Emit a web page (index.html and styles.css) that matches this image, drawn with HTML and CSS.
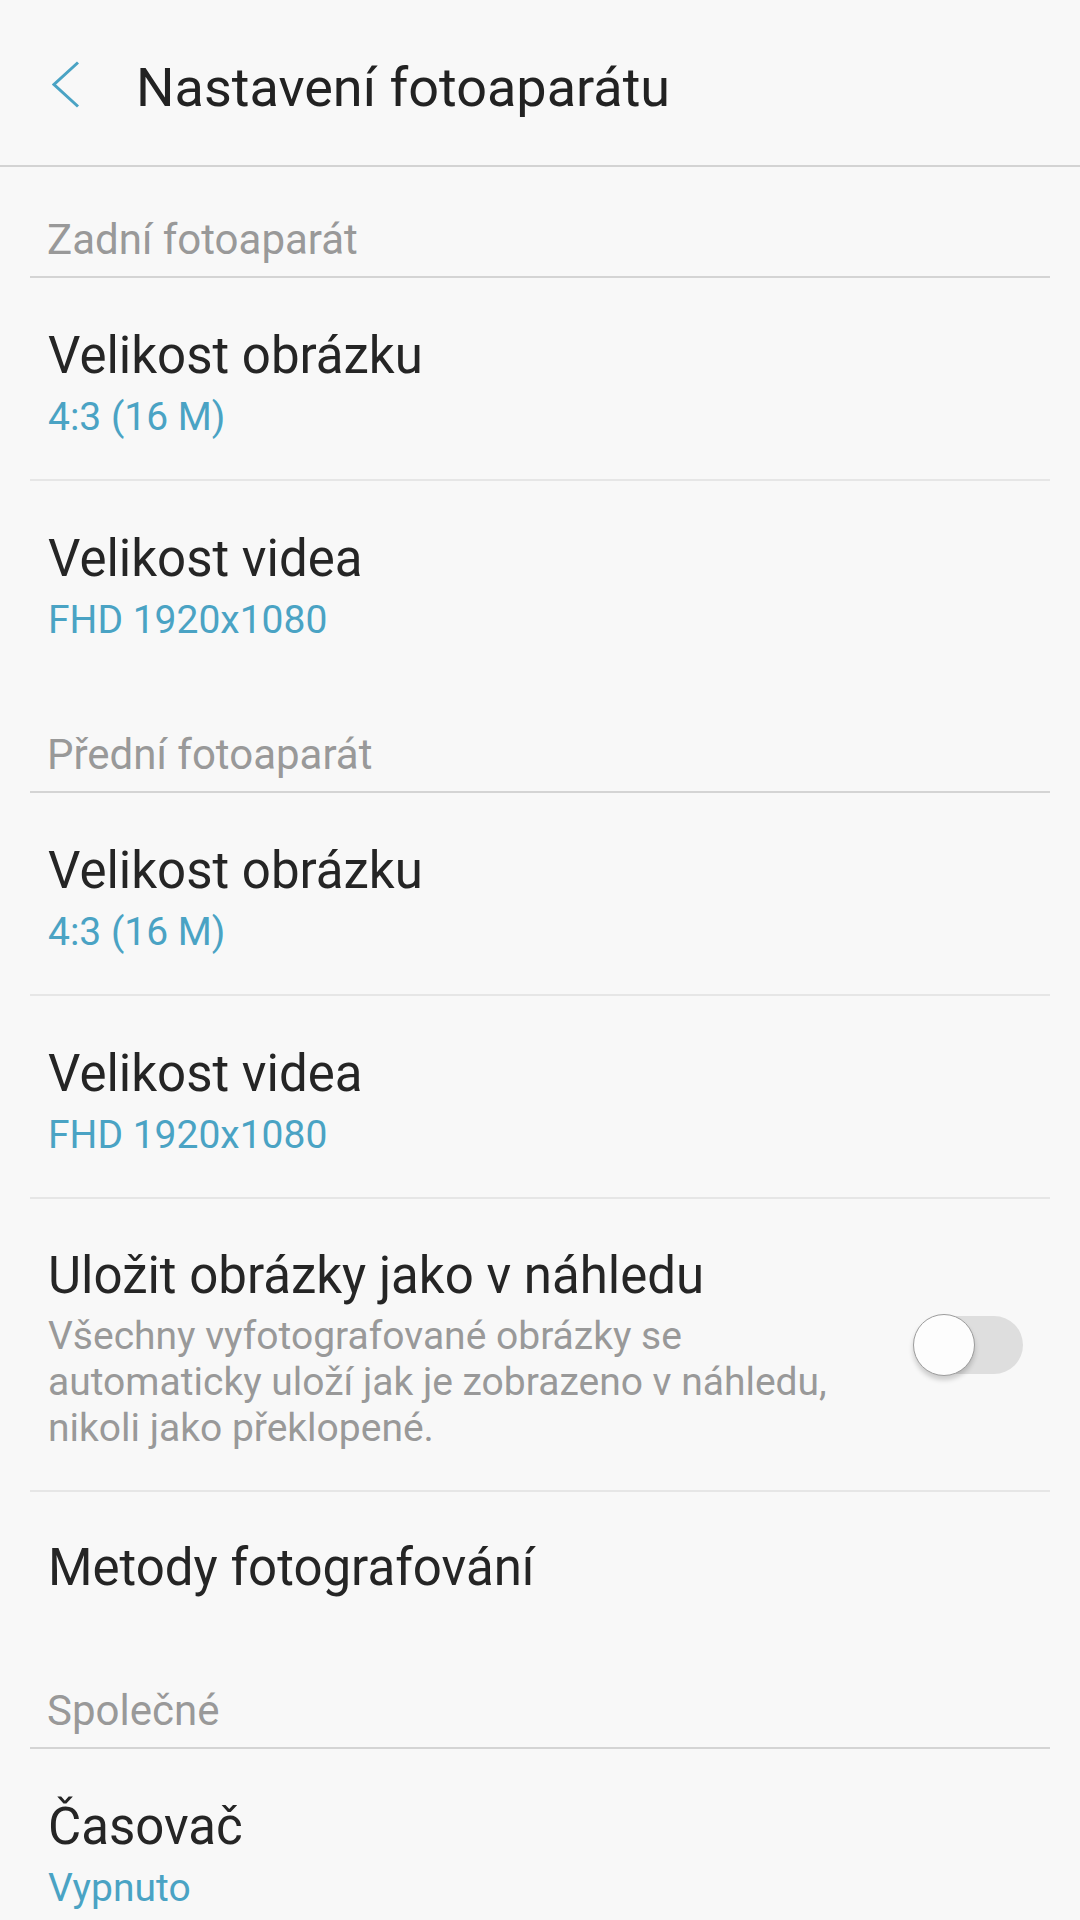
FILE: index.html
```html
<!DOCTYPE html>
<html>

<head>
  <title>Nastavení fotoaparátu</title>
  <link rel="stylesheet" href="styles.css">
</head>

<body>
  <header class="topbar">
    <svg class="back" viewBox="0 0 30 56" width="30" height="56">
      <polyline points="26,2.5 2,24.5 26,46.5" fill="none" stroke="#4aa3c4" stroke-width="3" />
    </svg>
    <h1 class="title">Nastavení fotoaparátu</h1>
  </header>

  <main class="list">
    <div class="section">Zadní fotoaparát</div>
    <div class="item">
      <div class="item-title">Velikost obrázku</div>
      <div class="item-value">4:3 (16 M)</div>
    </div>
    <div class="item last">
      <div class="item-title">Velikost videa</div>
      <div class="item-value">FHD 1920x1080</div>
    </div>

    <div class="section">Přední fotoaparát</div>
    <div class="item">
      <div class="item-title">Velikost obrázku</div>
      <div class="item-value">4:3 (16 M)</div>
    </div>
    <div class="item">
      <div class="item-title">Velikost videa</div>
      <div class="item-value">FHD 1920x1080</div>
    </div>
    <div class="item item-switch">
      <div class="item-text">
        <div class="item-title">Uložit obrázky jako v náhledu</div>
        <div class="item-desc">Všechny vyfotografované obrázky se automaticky uloží jak je zobrazeno v náhledu, nikoli jako překlopené.</div>
      </div>
      <div class="switch">
        <span class="track"></span>
        <span class="thumb"></span>
      </div>
    </div>
    <div class="item single last">
      <div class="item-title">Metody fotografování</div>
    </div>

    <div class="section">Společné</div>
    <div class="item last">
      <div class="item-title">Časovač</div>
      <div class="item-value">Vypnuto</div>
    </div>
  </main>
</body>

</html>
```

FILE: styles.css
```css
body {
  margin: 0;
  background: #f8f8f8;
  font-family: Roboto, "Noto Sans", sans-serif;
  color: #252525;
  overflow: hidden;
}

/* top bar */
.topbar {
  display: flex;
  align-items: center;
  height: 167px;
  padding-top: 10px;
  box-sizing: border-box;
  border-bottom: 2px solid #d3d3d3;
}
.topbar .back {
  margin-left: 52px;
  flex: none;
}
.topbar .title {
  margin: 0 0 0 54px;
  font-size: 54px;
  line-height: 64px;
  font-weight: 400;
  color: #222;
}

/* list */
.list {
  padding: 0 30px;
}

.section {
  padding: 49px 0 12px 17px;
  font-size: 42px;
  line-height: 48px;
  color: #999;
  border-bottom: 2px solid #d4d4d4;
}

.item {
  padding: 48px 18px 38px;
  border-bottom: 2px solid #e6e6e6;
}
.item.last {
  border-bottom: none;
}
.item.single {
  padding: 46px 18px 40px;
}

.item-title {
  font-size: 51px;
  line-height: 60px;
}
.item-value {
  margin-top: 7px;
  font-size: 39px;
  line-height: 48px;
  color: #4aa3c4;
}
.item-desc {
  margin-top: 7px;
  font-size: 39px;
  line-height: 46px;
  color: #999;
}

/* switch row */
.item-switch {
  display: flex;
  align-items: center;
  padding: 47px 27px 39px 18px;
}
.item-switch .item-text {
  flex: 1;
}
.switch {
  position: relative;
  flex: none;
  width: 110px;
  height: 62px;
  margin: 0 0 8px 30px;
}
.switch .track {
  position: absolute;
  right: 0;
  top: 2px;
  width: 106px;
  height: 58px;
  border-radius: 29px;
  background: #dedede;
}
.switch .thumb {
  position: absolute;
  left: 0;
  top: 0;
  width: 60px;
  height: 60px;
  border-radius: 50%;
  background: #fdfdfd;
  border: 1.5px solid #9c9c9c;
  box-shadow: 0 4px 5px rgba(0, 0, 0, 0.18);
}
```
